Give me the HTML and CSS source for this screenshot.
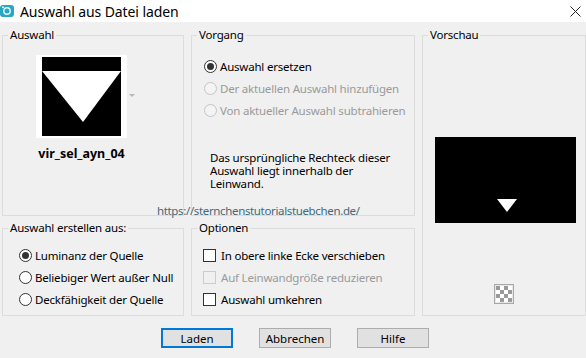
FILE: index.html
```html
<!DOCTYPE html>
<html lang="de">
<head>
    <meta charset="UTF-8">
    <title>Auswahl aus Datei laden</title>
    <link rel="stylesheet" href="styles.css">
</head>
<body>
    <div class="dialog">
        <header class="titlebar">
            <svg class="appIcon" width="14" height="14" viewBox="0 0 14 14">
                <rect x="0" y="1" width="14" height="12" rx="3" fill="#29a6c4"/>
                <circle cx="7" cy="7" r="3.2" fill="none" stroke="#e6f6fa" stroke-width="1.4"/>
                <rect x="2" y="2.5" width="2" height="1.5" fill="#e6f6fa"/>
            </svg>
            <span class="titleText">Auswahl aus Datei laden</span>
            <svg class="close" width="11" height="11" viewBox="0 0 11 11">
                <path d="M0.5 0.5 L10.5 10.5 M10.5 0.5 L0.5 10.5" stroke="#222" stroke-width="1"/>
            </svg>
        </header>

        <div class="panels">
            <fieldset class="group auswahl">
                <legend>Auswahl</legend>
                <div class="thumbRow">
                    <div class="thumbCol">
                        <svg class="thumb" width="91" height="83" viewBox="0 0 91 83">
                            <rect width="91" height="83" fill="#fff"/>
                            <rect x="6" y="2" width="79" height="79" fill="#000"/>
                            <polygon points="6,16 85,16 47,67" fill="#fff"/>
                        </svg>
                        <div class="fileName">vir_sel_ayn_04</div>
                    </div>
                    <span class="dropArrow"></span>
                </div>
            </fieldset>

            <fieldset class="group vorgang">
                <legend>Vorgang</legend>
                <div class="groupBody">
                    <label class="option"><span class="radio checked"></span>Auswahl ersetzen</label>
                    <label class="option disabled"><span class="radio"></span>Der aktuellen Auswahl hinzufügen</label>
                    <label class="option disabled"><span class="radio"></span>Von aktueller Auswahl subtrahieren</label>
                    <p class="note">Das ursprüngliche Rechteck dieser Auswahl liegt innerhalb der Leinwand.</p>
                </div>
            </fieldset>

            <fieldset class="group vorschau">
                <legend>Vorschau</legend>
                <svg class="preview" width="141" height="86" viewBox="0 0 141 86">
                    <rect width="141" height="86" fill="#000"/>
                    <polygon points="62,62 82,62 72,75" fill="#fff"/>
                </svg>
                <div class="checker">
                    <span></span><span></span><span></span><span></span>
                    <span></span><span></span><span></span><span></span>
                    <span></span><span></span><span></span><span></span>
                    <span></span><span></span><span></span><span></span>
                </div>
            </fieldset>

            <fieldset class="group erstellen">
                <legend>Auswahl erstellen aus:</legend>
                <div class="groupBody">
                    <label class="option"><span class="radio checked"></span>Luminanz der Quelle</label>
                    <label class="option"><span class="radio"></span>Beliebiger Wert außer Null</label>
                    <label class="option"><span class="radio"></span>Deckfähigkeit der Quelle</label>
                </div>
            </fieldset>

            <fieldset class="group optionen">
                <legend>Optionen</legend>
                <div class="groupBody">
                    <label class="option"><span class="check"></span>In obere linke Ecke verschieben</label>
                    <label class="option disabled"><span class="check"></span>Auf Leinwandgröße reduzieren</label>
                    <label class="option"><span class="check"></span>Auswahl umkehren</label>
                </div>
            </fieldset>

            <div class="watermark">https://sternchenstutorialstuebchen.de/</div>
        </div>

        <div class="actions">
            <button type="button" class="btn default">Laden</button>
            <button type="button" class="btn">Abbrechen</button>
            <button type="button" class="btn">Hilfe</button>
        </div>
    </div>
</body>
</html>
```

FILE: styles.css
```css
body {
    margin: 0;
    background: #f0f0f0;
    font-family: "Noto Sans", "Open Sans", sans-serif;
    font-size: 11.5px;
    letter-spacing: -0.2px;
    color: #000;
}
.dialog {
    width: 586px;
    height: 358px;
    overflow: hidden;
}
.titlebar {
    height: 22px;
    background: #fff;
    display: flex;
    align-items: center;
}
.appIcon {
    margin-right: 6px;
}
.titleText {
    font-size: 14px;
    letter-spacing: -0.1px;
    flex: 1;
}
.close {
    margin-right: 5px;
}
.panels {
    position: relative;
    display: grid;
    grid-template-columns: 182px 224px 164px;
    grid-template-rows: 189px 96px;
    column-gap: 7px;
    row-gap: 4px;
    margin: 5px 0 0 2px;
}
.group {
    margin: 0;
    padding: 0;
    min-width: 0;
    border: 1px solid #dcdcdc;
    display: flex;
    flex-direction: column;
}
.group legend {
    margin-left: 5px;
    padding: 0 2px;
    line-height: 16px;
}
.groupBody {
    display: flex;
    flex-direction: column;
}
.auswahl {
    grid-column: 1;
    grid-row: 1;
}
.vorgang {
    grid-column: 2;
    grid-row: 1;
}
.vorgang .groupBody {
    padding: 12px 0 0 12px;
}
.vorschau {
    grid-column: 3;
    grid-row: 1 / 3;
    align-items: center;
}
.erstellen {
    grid-column: 1;
    grid-row: 2;
}
.erstellen .groupBody {
    padding: 8px 0 0 16px;
}
.optionen {
    grid-column: 2;
    grid-row: 2;
}
.optionen .groupBody {
    padding: 8px 0 0 11px;
}
.thumbRow {
    display: flex;
    align-items: flex-start;
    margin: 12px 0 0 33px;
}
.thumbCol {
    display: flex;
    flex-direction: column;
    align-items: center;
}
.thumb {
    display: block;
}
.fileName {
    font-weight: bold;
    font-size: 12.5px;
    letter-spacing: 0;
    margin-top: 7px;
}
.dropArrow {
    width: 0;
    height: 0;
    margin: 39px 0 0 2px;
    border-left: 3px solid transparent;
    border-right: 3px solid transparent;
    border-top: 3px solid #b8b8b8;
}
.option {
    display: flex;
    align-items: center;
    height: 22px;
}
.option.disabled {
    color: #9a9a9a;
}
.radio {
    width: 11px;
    height: 11px;
    border: 1px solid #333;
    border-radius: 50%;
    background: #fff;
    margin-right: 3px;
    display: flex;
    align-items: center;
    justify-content: center;
}
.radio.checked::after {
    content: "";
    width: 7px;
    height: 7px;
    border-radius: 50%;
    background: #333;
}
.disabled .radio {
    border-color: #c4c4c4;
    background: #f4f4f4;
}
.check {
    width: 11px;
    height: 11px;
    border: 1px solid #333;
    background: #fff;
    margin-right: 5px;
}
.disabled .check {
    border-color: #cccccc;
    background: #f0f0f0;
}
.note {
    margin: 30px 0 0 6px;
    line-height: 13px;
    width: 190px;
}
.preview {
    display: block;
    margin-top: 94px;
    margin-left: 3px;
}
.checker {
    margin-top: 61px;
    width: 16px;
    height: 16px;
    padding: 1px;
    border: 1px solid #a8a8a8;
    background: #e8e8e8;
    display: grid;
    grid-template-columns: repeat(4, 4px);
    grid-template-rows: repeat(4, 4px);
}
.checker span {
    background: #fff;
}
.checker span:nth-child(8n+1),
.checker span:nth-child(8n+3),
.checker span:nth-child(8n+6),
.checker span:nth-child(8n+8) {
    background: #9a9a9a;
}
.watermark {
    position: absolute;
    left: 155px;
    top: 177px;
    line-height: 14px;
    color: #44687a;
    font-size: 11.5px;
    letter-spacing: -0.35px;
}
.actions {
    display: flex;
    gap: 26px;
    padding-left: 161px;
    margin-top: 12px;
}
.btn {
    width: 72px;
    height: 20px;
    padding: 0;
    font-family: inherit;
    font-size: 11.5px;
    background: #e1e1e1;
    border: 1px solid #adadad;
    color: #000;
}
.btn.default {
    border: 2px solid #0078d7;
}
```
